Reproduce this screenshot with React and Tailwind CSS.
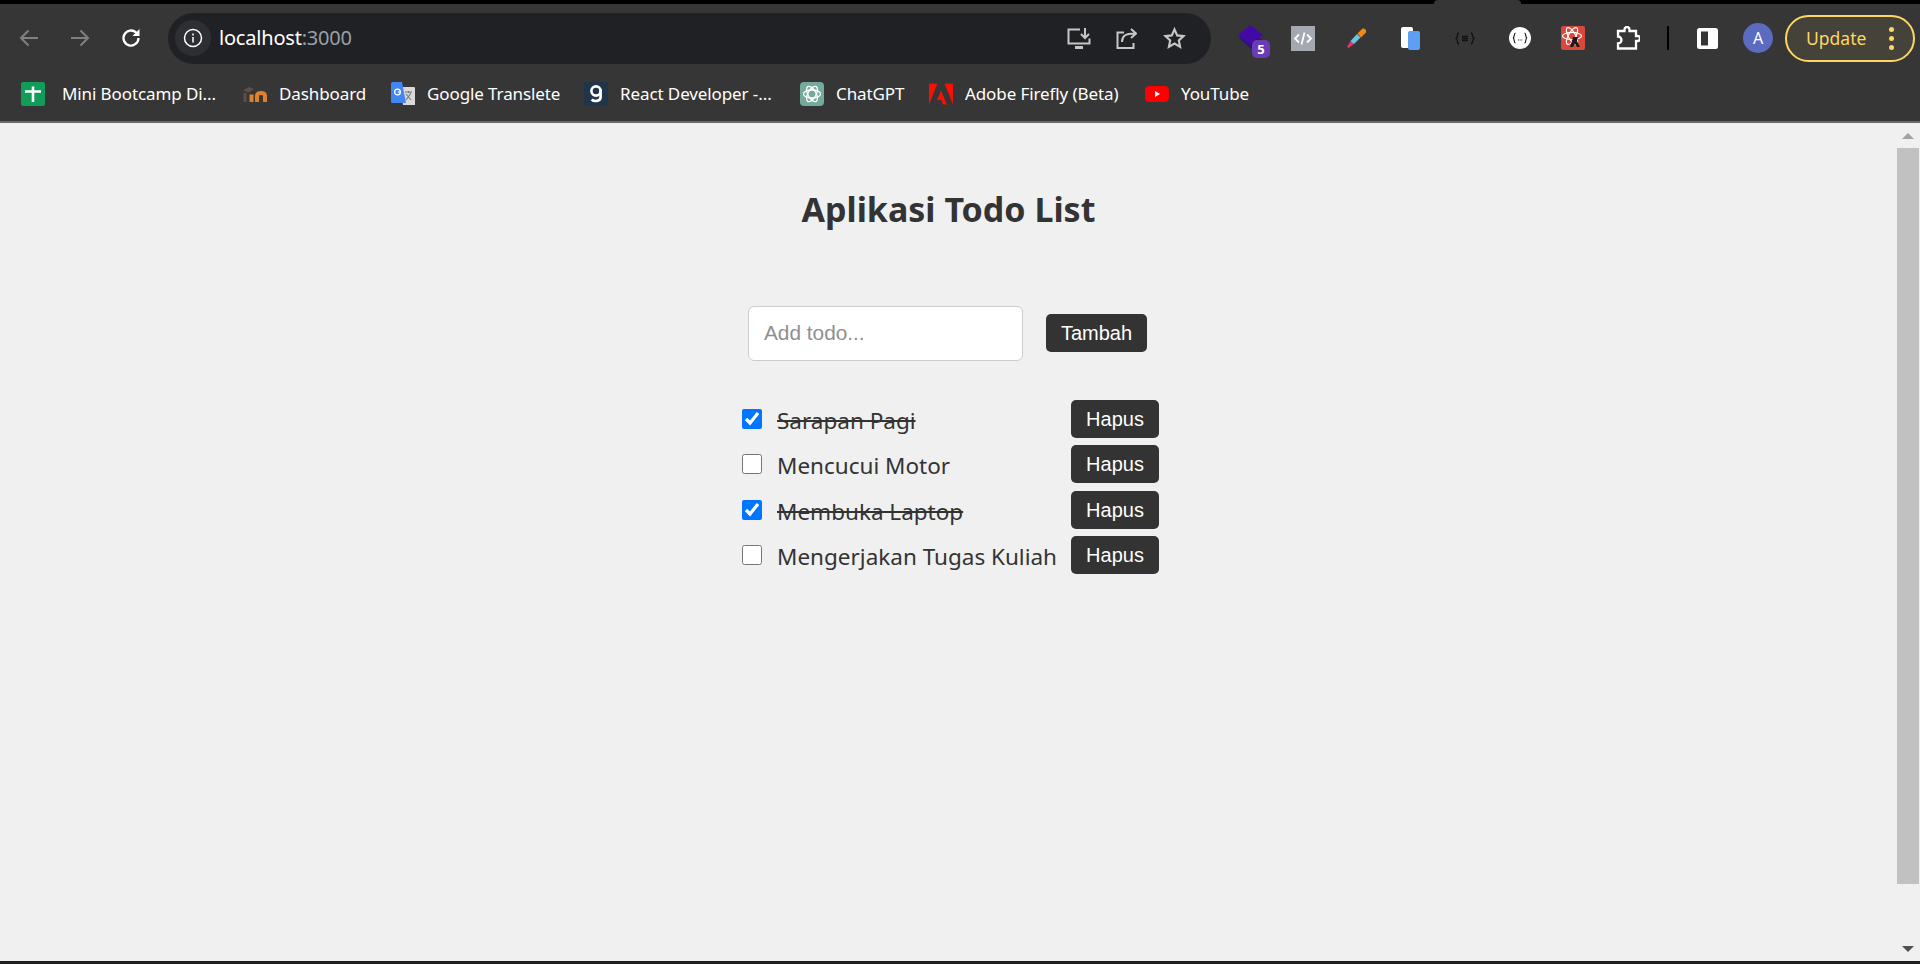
import React from "react";

const uiFont = { fontFamily: '"Noto Sans", sans-serif' };
const arial = { fontFamily: '"Liberation Sans", sans-serif' };

// favicons of the bookmarks bar
const SheetIcon = () => (
  <svg width="24" height="24" viewBox="0 0 24 24">
    <rect width="24" height="24" rx="2" fill="#0f9d58" />
    <path d="M4 9.500h16M12 4.500V20" stroke="#fff" strokeWidth="2.600" fill="none" />
  </svg>
);

const MoodleIcon = () => (
  <svg width="24" height="24" viewBox="0 0 24 24">
    <path d="M0 8.500 6 5l5 2-5 3.500z" fill="#5a5048" />
    <path d="M2 11v9" stroke="#5a5048" strokeWidth="3" />
    <path d="M8.500 20v-7.500M14 20v-6.500c0-3.500 8-3.500 8 0V20" stroke="#e0812a" strokeWidth="4" fill="none" />
  </svg>
);

const TranslateIcon = () => (
  <svg width="24" height="24" viewBox="0 0 24 24">
    <path d="M10 5h13a1 1 0 0 1 1 1v17H12z" fill="#d9d9d9" />
    <path d="M14 10h7M17.500 9v2M15 18l5-7M15 12l5 6" stroke="#777" strokeWidth="1.100" fill="none" />
    <path d="M1.500 0H11l4 21H1.500A1.500 1.500 0 0 1 0 19.500v-18A1.500 1.500 0 0 1 1.500 0z" fill="#4285f4" />
    <circle cx="6.500" cy="10" r="2.900" stroke="#fff" strokeWidth="1.300" fill="none" />
    <path d="M6.700 10h3" stroke="#fff" strokeWidth="1.200" />
  </svg>
);

const ReactDevIcon = () => (
  <svg width="24" height="24" viewBox="0 0 24 24">
    <rect width="24" height="24" fill="#20344a" />
    <circle cx="12" cy="9" r="4.600" stroke="#fff" strokeWidth="2.600" fill="none" />
    <path d="M16.600 7v8c0 4.500-6.500 5-9 2.500" stroke="#fff" strokeWidth="2.600" fill="none" />
  </svg>
);

const ChatGptIcon = () => (
  <svg width="24" height="24" viewBox="0 0 24 24">
    <rect width="24" height="24" rx="4" fill="#74aa9c" />
    <g stroke="#fff" strokeWidth="1.300" fill="none">
      <ellipse cx="12" cy="12" rx="8.500" ry="4" />
      <ellipse cx="12" cy="12" rx="8.500" ry="4" transform="rotate(60 12 12)" />
      <ellipse cx="12" cy="12" rx="8.500" ry="4" transform="rotate(120 12 12)" />
    </g>
  </svg>
);

const AdobeIcon = () => (
  <svg width="24" height="24" viewBox="0 0 24 24">
    <path d="M0 1.500h8.500L0 22.500zM15.500 1.500H24v21zM12 8.500l6 14h-4l-1.700-4.500H8z" fill="#fa0f00" />
  </svg>
);

const YoutubeIcon = () => (
  <svg width="24" height="24" viewBox="0 0 24 24">
    <rect y="4" width="24" height="16" rx="4.500" fill="#f00" />
    <path d="M10 9v6l5-3z" fill="#fff" />
  </svg>
);

const bookmarks = [
  { icon: <SheetIcon />, label: "Mini Bootcamp Di...", box: "w-[222px] gap-[17px]" },
  { icon: <MoodleIcon />, label: "Dashboard", box: "w-[148px] gap-[12px]" },
  { icon: <TranslateIcon />, label: "Google Translete", box: "w-[193px] gap-[12px]" },
  { icon: <ReactDevIcon />, label: "React Developer -...", box: "w-[216px] gap-[12px]" },
  { icon: <ChatGptIcon />, label: "ChatGPT", box: "w-[129px] gap-[12px]" },
  { icon: <AdobeIcon />, label: "Adobe Firefly (Beta)", box: "w-[216px] gap-[12px]" },
  { icon: <YoutubeIcon />, label: "YouTube", box: "w-[110px] gap-[12px]" },
];

const todos = [
  { text: "Sarapan Pagi", done: true },
  { text: "Mencucui Motor", done: false },
  { text: "Membuka Laptop", done: true },
  { text: "Mengerjakan Tugas Kuliah", done: false },
];

const Toolbar = () => (
  <div className="flex items-center h-[68px]">
    {/* nav buttons */}
    <div className="flex items-center w-[168px] pl-[18px] gap-[29px]">
      <svg width="22" height="22" viewBox="0 0 22 22" fill="none" stroke="#7f8082" strokeWidth="2">
        <path d="M20 11H3M10.500 3.500 3 11l7.500 7.500" />
      </svg>
      <svg width="22" height="22" viewBox="0 0 22 22" fill="none" stroke="#7f8082" strokeWidth="2">
        <path d="M2 11h17M11.500 3.500 19 11l-7.500 7.500" />
      </svg>
      <svg width="22" height="22" viewBox="0 0 22 22" fill="none" stroke="#fff" strokeWidth="2.300">
        <path d="M18.500 11a7.500 7.500 0 1 1-2.300-5.400L18.500 8" />
        <path d="M19.500 2v7h-7" fill="#fff" stroke="none" />
      </svg>
    </div>

    {/* address bar */}
    <div className="flex items-center w-[1043px] h-[51px] rounded-full bg-[#202124] pl-[7px]">
      <div className="flex items-center justify-center w-[36px] h-[36px] rounded-full bg-[#2e2f32]">
        <svg width="20" height="20" viewBox="0 0 20 20" fill="none" stroke="#fff" strokeWidth="1.500">
          <circle cx="10" cy="10" r="8.500" />
          <path d="M10 9v5.500M10 5.500v2" />
        </svg>
      </div>
      <span className="ml-[8px] text-[20px] tracking-[-0.2px] text-white" style={uiFont}>
        localhost<span className="text-[#9aa0a6]">:3000</span>
      </span>
      <div className="ml-auto flex items-center pr-[25px]">
        <svg width="24" height="21" viewBox="0 0 24 21" fill="none" stroke="#c7c7c7" strokeWidth="2">
          <path d="M13 1.500H1.500v14h21v-5" />
          <path d="M18 0v9M14 6l4 4 4-4" />
          <path d="M8 19.500h8" strokeWidth="3" />
        </svg>
        <svg width="21" height="21" viewBox="0 0 21 21" fill="none" stroke="#c7c7c7" strokeWidth="2" className="ml-[25px]">
          <path d="M8 4.500H1.500V20h16v-5" />
          <path d="M6 14c0-6 3-8.500 13-8.500M15 1l5 4.500L15 10" />
        </svg>
        <svg width="23" height="22" viewBox="0 0 24 23" fill="none" stroke="#c7c7c7" strokeWidth="2.200" className="ml-[26px]">
          <path d="m12 2.500 2.800 6.300 6.700.7-5 4.500 1.400 6.700L12 17.300l-5.900 3.400 1.400-6.700-5-4.500 6.700-.7z" />
        </svg>
      </div>
    </div>

    {/* extensions */}
    <div className="relative ml-[27px] w-[32px] h-[36px] shrink-0">
      <svg width="25" height="24" viewBox="0 0 25 24" className="absolute left-0 top-[5px]">
        <path d="M1 13 12.500 6 24 15l-11 9z" fill="#2e1578" />
        <path d="M0 10 12.500 0 25 10 12.500 19z" fill="#4309a8" />
      </svg>
      <span
        className="absolute left-[14px] top-[20px] w-[18px] h-[18px] rounded-[5px] bg-[#6a3bb5] text-white text-[13px] font-bold leading-[18px] text-center"
        style={uiFont}
      >
        5
      </span>
    </div>
    <svg width="24" height="25" viewBox="0 0 24 25" className="ml-[21px]">
      <rect width="24" height="25" fill="#a4a8b0" />
      <path d="M8 8.500l-4 4 4 4M16 8.500l4 4-4 4M13.500 6.500l-3 12" stroke="#fff" strokeWidth="1.800" fill="none" />
    </svg>
    <svg width="20" height="20" viewBox="0 0 20 20" className="ml-[32px]">
      <path d="M0 19 3.500 13l3.500 3-5.500 4z" fill="#e8336d" />
      <path d="M3.500 13 10 6l3.500 3.500L7 16z" fill="#6fc3e8" />
      <path d="M10.500 5.500 15 1c2-1.500 5 1 4 3.500L14 9.500z" fill="#f5890a" />
    </svg>
    <svg width="20" height="23" viewBox="0 0 20 23" className="ml-[34px]">
      <rect x="0" y="0" width="12" height="21" rx="2" fill="#fff" />
      <rect x="7" y="4" width="12" height="19" rx="2" fill="#5c9ff5" />
    </svg>
    <svg width="20" height="13" viewBox="0 0 20 13" fill="none" stroke="#111" strokeWidth="1.300" className="ml-[34px]">
      <path d="M4 1C1.500 1 3.500 5.500 1 6.500 3.500 7.500 1.500 12 4 12M16 1c2.500 0 .5 4.500 3 5.500-2.500 1-.5 5.500-3 5.500M7 4.500h6M7 6.500h6M7 8.500h6" />
    </svg>
    <div className="flex items-center justify-center ml-[34px] w-[22px] h-[22px] rounded-full bg-white">
      <svg width="16" height="12" viewBox="0 0 16 12" fill="none" stroke="#111" strokeWidth="1.100">
        <path d="M3.500 1C1.500 1 3 5.500 1 6c2 .5.500 5 2.500 5M12.500 1c2 0 .5 4.500 2.500 5-2 .5-.5 5-2.500 5M6 8h.8M7.700 8h.8M9.400 8h.8" />
      </svg>
    </div>
    <svg width="24" height="24" viewBox="0 0 24 24" className="ml-[30px]">
      <rect width="24" height="24" rx="2" fill="#d9483b" />
      <g stroke="#fff" strokeWidth="1.200" fill="none">
        <ellipse cx="11" cy="10" rx="9.500" ry="3.600" />
        <ellipse cx="11" cy="10" rx="9.500" ry="3.600" transform="rotate(60 11 10)" />
        <ellipse cx="11" cy="10" rx="9.500" ry="3.600" transform="rotate(120 11 10)" />
      </g>
      <path d="M12 11h5l-1 4 3 6h-3l-2-3.500-2 3.500H9l2-6z" fill="#1a1a1a" />
    </svg>
    <svg width="24" height="24" viewBox="0 0 24 24" fill="none" stroke="#fff" strokeWidth="2.300" className="ml-[31px]">
      <path d="M2 5h6.500V3.500a2.500 2.500 0 0 1 5 0V5H20v5h1.500a2.500 2.500 0 0 1 0 5H20v7.500H2v-5a3.500 3.500 0 0 0 0-7z" />
    </svg>
    <div className="ml-[27px] w-[2px] h-[24px] bg-black" />
    <svg width="21" height="21" viewBox="0 0 21 21" className="ml-[28px]">
      <rect width="21" height="21" rx="2.500" fill="#fff" />
      <rect x="4" y="3.500" width="7" height="14" fill="#363636" />
    </svg>
    <div
      className="ml-[25px] flex items-center justify-center w-[30px] h-[30px] rounded-full bg-[#5b6bc0] text-white text-[16px]"
      style={uiFont}
    >
      A
    </div>
    <div className="ml-[12px] flex items-center justify-between w-[130px] h-[47px] rounded-full border-2 border-[#fdd663] bg-[#45423a] pl-[19px] pr-[19px]">
      <span className="text-[#fdd663] text-[17.500px]" style={uiFont}>
        Update
      </span>
      <div className="flex flex-col gap-[4px]">
        <div className="w-[5px] h-[5px] rounded-full bg-[#fdd663]" />
        <div className="w-[5px] h-[5px] rounded-full bg-[#fdd663]" />
        <div className="w-[5px] h-[5px] rounded-full bg-[#fdd663]" />
      </div>
    </div>
  </div>
);

const BookmarksBar = () => (
  <div className="flex items-start h-[49px] pl-[21px] pt-[10px]">
    {bookmarks.map((b) => (
      <div key={b.label} className={`flex items-center shrink-0 h-[24px] ${b.box}`}>
        {b.icon}
        <span className="text-white text-[17px] tracking-[-0.1px] whitespace-nowrap" style={uiFont}>
          {b.label}
        </span>
      </div>
    ))}
  </div>
);

const Scrollbar = () => (
  <div className="flex flex-col items-start w-[23px] shrink-0">
    <div className="flex justify-center w-[22px] h-[25px] pt-[10px]">
      <div className="w-0 h-0 border-x-[6px] border-x-transparent border-b-[6px] border-b-[#a3a3a3]" />
    </div>
    <div className="w-[22px] h-[736px] bg-[#c1c1c1]" />
    <div className="flex justify-center w-[22px] pt-[62px]">
      <div className="w-0 h-0 border-x-[6px] border-x-transparent border-t-[6px] border-t-[#505050]" />
    </div>
  </div>
);

const App = () => {
  return (
    <div className="flex flex-col w-full h-[964px] overflow-hidden bg-[#f0f0f0]">
      {/* chrome */}
      <div className="bg-[#363636] shrink-0">
        <div className="flex h-[4px] bg-black">
          <div className="ml-[1434px] w-[87px] h-[4px] bg-[#363636] rounded-t-[4px]" />
        </div>
        <Toolbar />
        <BookmarksBar />
        <div className="h-[2px] bg-[#6a6a6a]" />
      </div>

      {/* page */}
      <div className="flex flex-1 min-h-0">
        <div className="flex flex-1 flex-col items-center pt-[62px]">
          <h1 className="text-[34px] font-bold leading-[48px] text-[#333] mb-[73px]" style={uiFont}>
            Aplikasi Todo List
          </h1>

          <form className="flex items-center gap-[23px] pr-[2px] mb-[39px]">
            <input
              type="text"
              placeholder="Add todo..."
              className="w-[275px] h-[55px] rounded-[6px] border border-[#ccc] bg-white pl-[15px] pb-[2px] text-[20.800px] placeholder:text-[#8f8f8f] outline-none"
              style={arial}
            />
            <button
              type="button"
              className="w-[101px] h-[38px] -mt-[1px] rounded-[5px] bg-[#333] text-white text-[20px]"
              style={arial}
            >
              Tambah
            </button>
          </form>

          <ul className="flex flex-col gap-[7.400px] pl-[4px]">
            {todos.map((todo) => (
              <li key={todo.text} className="flex items-center h-[38px]">
                <input
                  type="checkbox"
                  defaultChecked={todo.done}
                  className="w-5 h-5 accent-[#0075ff]"
                />
                <span
                  className={`w-[294px] ml-[15px] pt-[4px] text-[22.500px] leading-[32px] text-[#333] whitespace-nowrap ${
                    todo.done ? "line-through" : ""
                  }`}
                  style={uiFont}
                >
                  {todo.text}
                </span>
                <button
                  type="button"
                  className="w-[88px] h-[38px] rounded-[5px] bg-[#333] text-white text-[20px]"
                  style={arial}
                >
                  Hapus
                </button>
              </li>
            ))}
          </ul>
        </div>
        <Scrollbar />
      </div>

      <div className="h-[3px] shrink-0 bg-[#201f1f]" />
    </div>
  );
};

export default App;
